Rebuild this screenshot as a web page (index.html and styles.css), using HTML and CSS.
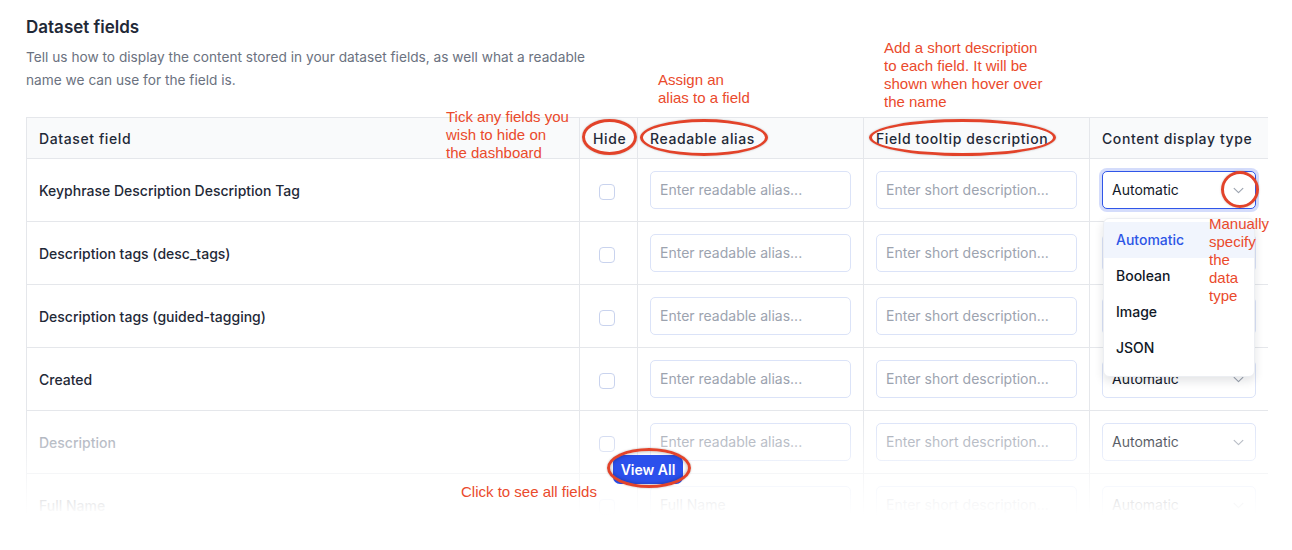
FILE: index.html
```html
<!DOCTYPE html>
<html>
<head>
<meta charset="utf-8">
<link rel="stylesheet" href="styles.css">
</head>
<body>
<div class="page">
  <h1 class="title">Dataset fields</h1>
  <p class="desc">Tell us how to display the content stored in your dataset fields, as well what a readable<br>name we can use for the field is.</p>

  <div class="table-wrap">
    <table class="fields">
      <colgroup>
        <col class="c1"><col class="c2"><col class="c3"><col class="c4"><col class="c5">
      </colgroup>
      <thead>
        <tr>
          <th>Dataset field</th>
          <th class="th-hide">Hide</th>
          <th>Readable alias</th>
          <th>Field tooltip description</th>
          <th>Content display type</th>
        </tr>
      </thead>
      <tbody>
        <tr>
          <td class="name">Keyphrase Description Description Tag</td>
          <td class="chk"><span class="box"></span></td>
          <td><div class="input ph">Enter readable alias...</div></td>
          <td><div class="input ph">Enter short description...</div></td>
          <td><div class="select focus"><span>Automatic</span><svg class="chev" viewBox="0 0 12 8" width="11" height="7"><path d="M1 1.5l5 5 5-5" fill="none" stroke="#9ca3af" stroke-width="1.3" stroke-linecap="round" stroke-linejoin="round"/></svg></div></td>
        </tr>
        <tr>
          <td class="name">Description tags (desc_tags)</td>
          <td class="chk"><span class="box"></span></td>
          <td><div class="input ph">Enter readable alias...</div></td>
          <td><div class="input ph">Enter short description...</div></td>
          <td><div class="select"><span>Automatic</span><svg class="chev" viewBox="0 0 12 8" width="11" height="7"><path d="M1 1.5l5 5 5-5" fill="none" stroke="#9ca3af" stroke-width="1.3" stroke-linecap="round" stroke-linejoin="round"/></svg></div></td>
        </tr>
        <tr>
          <td class="name">Description tags (guided-tagging)</td>
          <td class="chk"><span class="box"></span></td>
          <td><div class="input ph">Enter readable alias...</div></td>
          <td><div class="input ph">Enter short description...</div></td>
          <td><div class="select"><span>Automatic</span><svg class="chev" viewBox="0 0 12 8" width="11" height="7"><path d="M1 1.5l5 5 5-5" fill="none" stroke="#9ca3af" stroke-width="1.3" stroke-linecap="round" stroke-linejoin="round"/></svg></div></td>
        </tr>
        <tr>
          <td class="name">Created</td>
          <td class="chk"><span class="box"></span></td>
          <td><div class="input ph">Enter readable alias...</div></td>
          <td><div class="input ph">Enter short description...</div></td>
          <td><div class="select"><span>Automatic</span><svg class="chev" viewBox="0 0 12 8" width="11" height="7"><path d="M1 1.5l5 5 5-5" fill="none" stroke="#9ca3af" stroke-width="1.3" stroke-linecap="round" stroke-linejoin="round"/></svg></div></td>
        </tr>
        <tr>
          <td class="name muted">Description</td>
          <td class="chk"><span class="box"></span></td>
          <td><div class="input ph">Enter readable alias...</div></td>
          <td><div class="input ph">Enter short description...</div></td>
          <td><div class="select"><span>Automatic</span><svg class="chev" viewBox="0 0 12 8" width="11" height="7"><path d="M1 1.5l5 5 5-5" fill="none" stroke="#9ca3af" stroke-width="1.3" stroke-linecap="round" stroke-linejoin="round"/></svg></div></td>
        </tr>
        <tr>
          <td class="name">Full Name</td>
          <td class="chk"><span class="box"></span></td>
          <td><div class="input val">Full Name</div></td>
          <td><div class="input ph">Enter short description...</div></td>
          <td><div class="select"><span>Automatic</span><svg class="chev" viewBox="0 0 12 8" width="11" height="7"><path d="M1 1.5l5 5 5-5" fill="none" stroke="#9ca3af" stroke-width="1.3" stroke-linecap="round" stroke-linejoin="round"/></svg></div></td>
        </tr>
      </tbody>
    </table>
    <div class="fade"></div>
  </div>

  <ul class="menu">
    <li class="active">Automatic</li>
    <li>Boolean</li>
    <li>Image</li>
    <li>JSON</li>
  </ul>

  <button class="view-all">View All</button>

  <div class="oval o-hide"></div>
  <div class="oval o-alias"></div>
  <div class="oval o-tip"></div>
  <div class="oval o-chev"></div>
  <div class="oval o-view"></div>

  <div class="note n-hide">Tick any fields you<br>wish to hide on<br>the dashboard</div>
  <div class="note n-alias">Assign an<br>alias to a field</div>
  <div class="note n-tip">Add a short description<br>to each field. It will be<br>shown when hover over<br>the name</div>
  <div class="note n-type">Manually<br>specify<br>the<br>data<br>type</div>
  <div class="note n-view">Click to see all fields</div>
</div>
</body>
</html>
```

FILE: styles.css
```css
* { box-sizing: border-box; }
html, body { margin: 0; padding: 0; background: #ffffff; }
body { font-family: Inter, "Noto Sans", sans-serif; color: #1f2937; }

.page {
  position: relative;
  width: 1292px;
  height: 550px;
  padding: 14px 24px 0 26px;
  overflow: hidden;
}

.title {
  margin: 0;
  font-size: 17px;
  line-height: 26px;
  font-weight: 600;
  color: #1f2937;
}

.desc {
  margin: 6px 0 0 0;
  font-size: 13.7px;
  line-height: 23px;
  color: #6b7280;
}

.table-wrap {
  position: relative;
  margin-top: 25px;
  height: 398px;
  overflow: hidden;
}

.fields {
  width: 1242px;
  border-collapse: collapse;
  table-layout: fixed;
}
.c1 { width: 553px; }
.c2 { width: 58px; }
.c3 { width: 226px; }
.c4 { width: 226px; }
.c5 { width: 179px; }

.fields th, .fields td {
  border: 1px solid #e5e7eb;
  text-align: left;
  padding: 0 12px;
}
.fields th {
  height: 41px;
  background: #f9fafb;
  font-size: 14px;
  font-weight: 500;
  letter-spacing: 0.6px;
  color: #1f2937;
}
.fields th.th-hide { padding: 0 0 0 13px; }
.fields td { height: 63px; }
.fields td.name {
  font-size: 14px;
  font-weight: 500;
  color: #1f2937;
}
.fields td.name.muted { color: #9ca3af; }

.fields td.chk { padding: 0; text-align: center; }
.box {
  display: inline-block;
  width: 16px;
  height: 16px;
  border: 1px solid #c9d3ee;
  border-radius: 4px;
  vertical-align: middle;
  margin-left: -3px;
}

.input, .select {
  height: 38px;
  border: 1px solid #dbe3f8;
  border-radius: 5px;
  font-size: 14px;
  line-height: 36px;
  padding: 0 9px;
  white-space: nowrap;
  overflow: hidden;
}
.input { width: 201px; }
.input.ph { color: #9ca3af; }
.input.val { color: #6b7280; }

.select {
  width: 154px;
  display: flex;
  align-items: center;
  justify-content: space-between;
  color: #111827;
  padding: 0 11px 0 9px;
  background: #fff;
}
.select.focus {
  border: 1.5px solid #2f55e8;
  box-shadow: 0 0 0 3px #d4dcfb;
}

.fade {
  position: absolute;
  left: 0;
  right: 0;
  top: 300px;
  bottom: 0;
  background: linear-gradient(to bottom, rgba(255,255,255,0) 0%, rgba(255,255,255,0.45) 40%, rgba(255,255,255,0.85) 80%, #fff 100%);
}

.menu {
  position: absolute;
  left: 1103px;
  top: 218px;
  width: 152px;
  height: 159px;
  margin: 0;
  padding: 3px 0 0 0;
  list-style: none;
  background: #fff;
  border: 1px solid #eceef2;
  border-radius: 6px;
  box-shadow: 0 4px 10px rgba(17, 24, 39, 0.12);
}
.menu li {
  height: 36px;
  line-height: 36px;
  padding-left: 12px;
  font-size: 14px;
  font-weight: 500;
  color: #111827;
}
.menu li.active {
  background: #f1f5fd;
  color: #2d55e6;
}

.view-all {
  position: absolute;
  left: 613px;
  top: 455px;
  width: 70px;
  height: 29px;
  border: none;
  border-radius: 7px;
  background: #2b50ec;
  color: #fff;
  font-family: Inter, "Noto Sans", sans-serif;
  font-size: 14px;
  font-weight: 600;
  padding: 0;
}

.oval {
  position: absolute;
  border: 3px solid #e2432a;
  border-radius: 50%;
  box-shadow: 0 0 2px rgba(0,0,0,0.25);
}
.o-hide { left: 582px; top: 119px; width: 55px; height: 36px; }
.o-alias { left: 640px; top: 119px; width: 128px; height: 37px; }
.o-tip { left: 869px; top: 119px; width: 187px; height: 37px; }
.o-chev { left: 1221px; top: 171px; width: 38px; height: 37px; }
.o-view { left: 607px; top: 448px; width: 84px; height: 40px; box-shadow: inset 0 0 4px rgba(0,0,0,0.35), 0 0 2px rgba(0,0,0,0.3); }

.note {
  position: absolute;
  font-family: "Liberation Sans", Arial, sans-serif;
  font-size: 15px;
  line-height: 18px;
  color: #ea4a2c;
  white-space: nowrap;
}
.n-hide { left: 446px; top: 108px; }
.n-alias { left: 658px; top: 71px; }
.n-tip { left: 884px; top: 39px; }
.n-type { left: 1209px; top: 215px; }
.n-view { left: 461px; top: 483px; }
```
